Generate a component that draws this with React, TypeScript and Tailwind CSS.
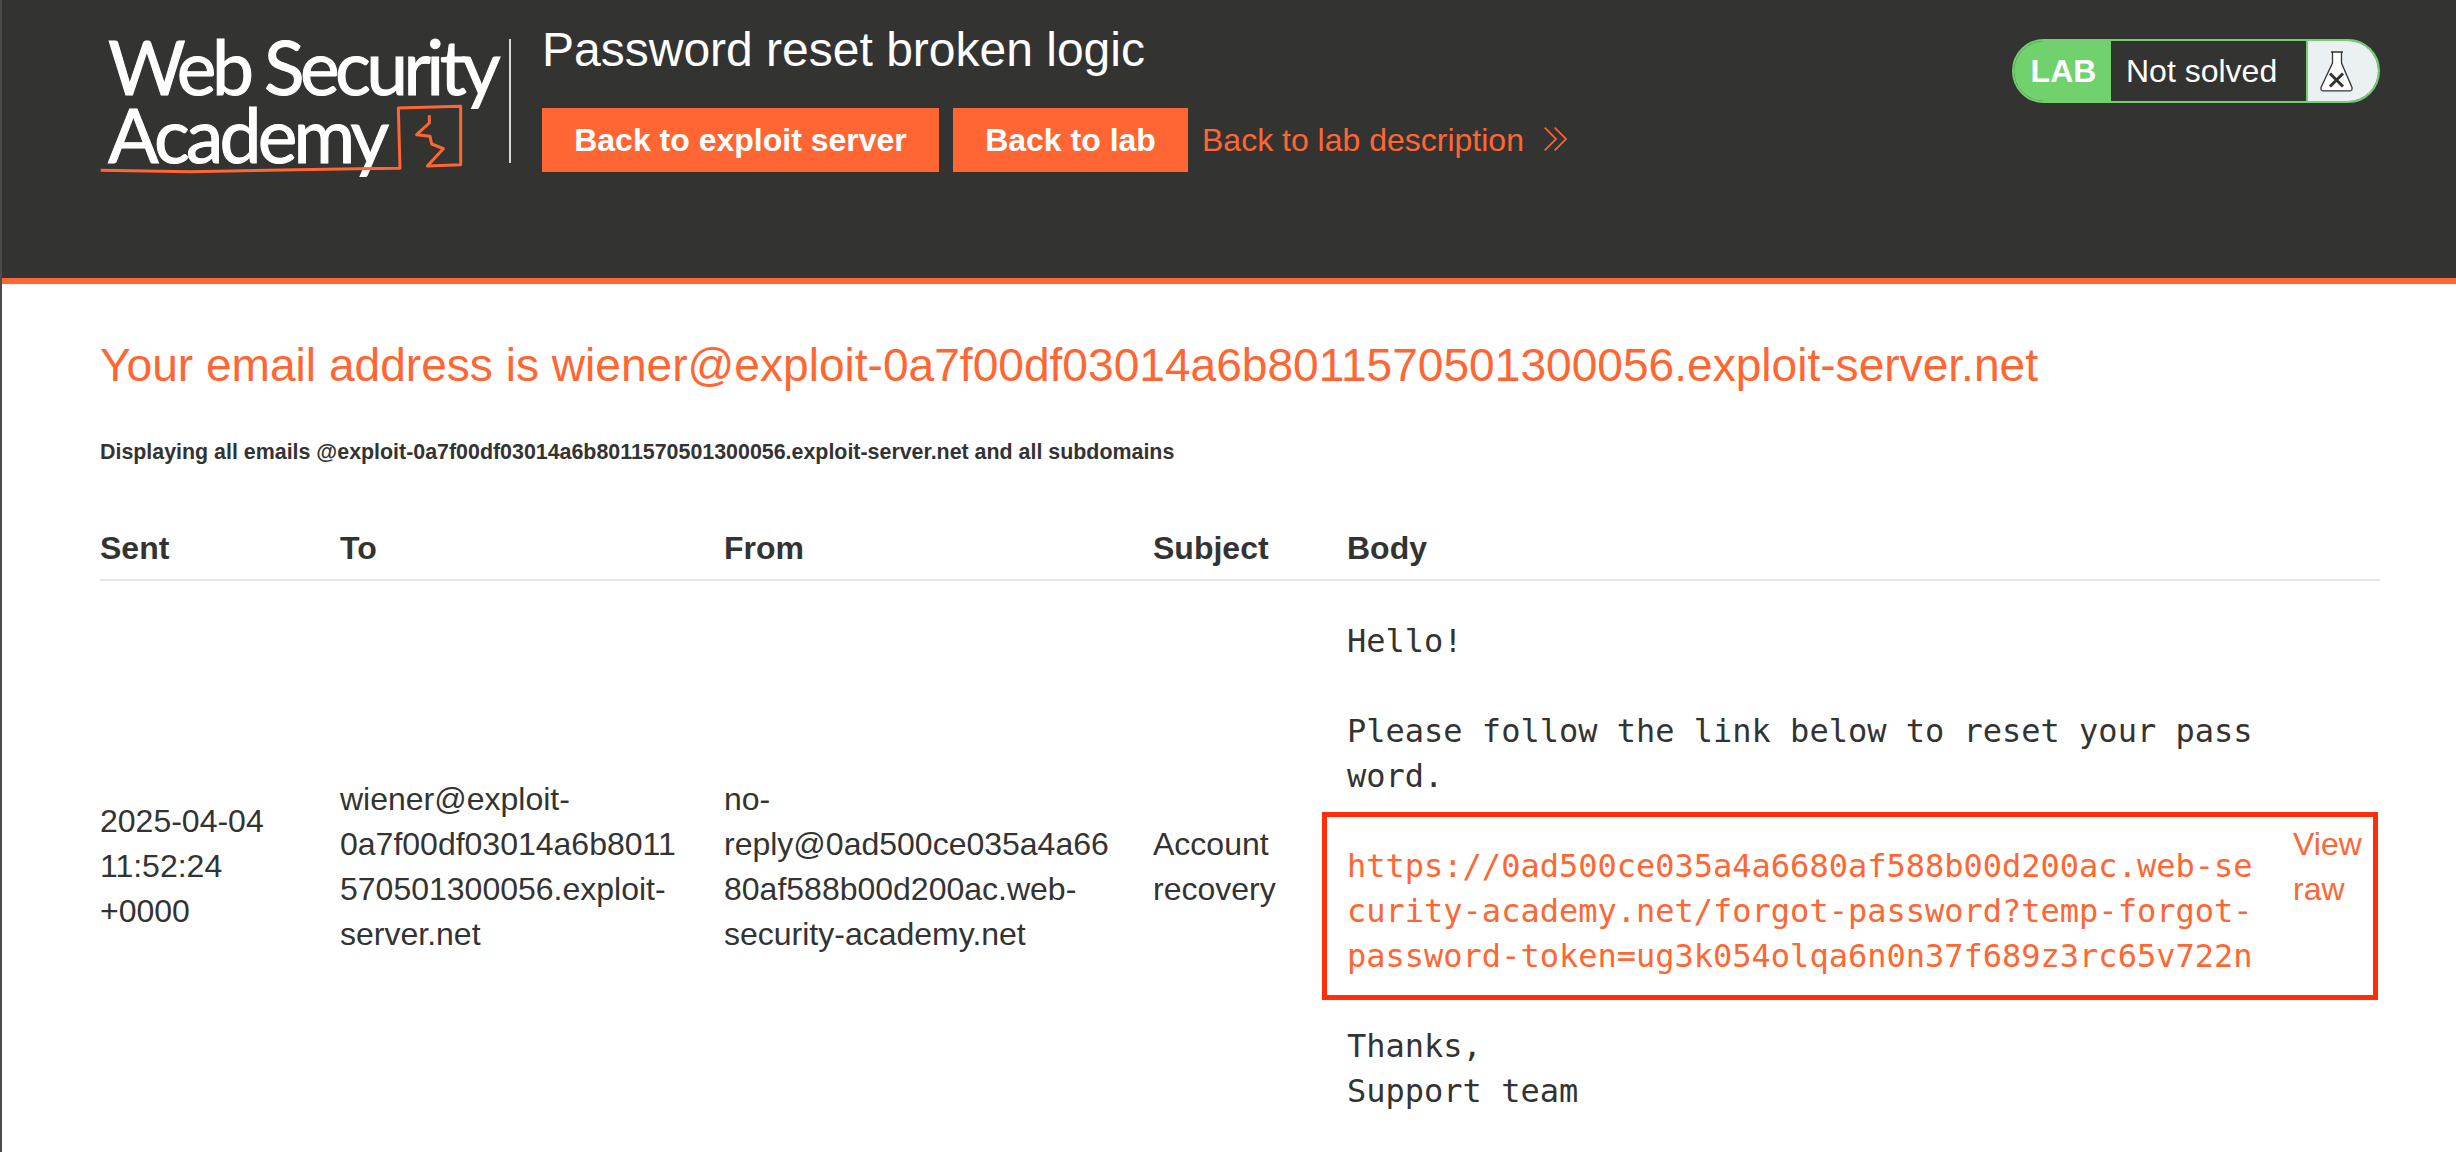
const sans = "font-['Liberation_Sans',Arial,sans-serif]"
const cols = "grid grid-cols-[240px_384px_429px_194px_1fr]"

function Logo() {
  return (
    <div className="relative w-[410px] h-[150px] shrink-0 font-['Lato',sans-serif] text-white [-webkit-text-stroke:1px_white]">
      <div className="flex flex-col gap-[4px] mt-[-4.5px] text-[75px] leading-[64px] whitespace-nowrap">
        <div className="tracking-[-4.55px]">Web Security</div>
        <div className="tracking-[-3.8px]">Academy</div>
      </div>
      <svg
        className="absolute left-[-18px] top-[-20px]"
        width="440"
        height="170"
        viewBox="0 0 1320 510"
        fill="none"
      >
        <path
          d="M32 457 L300 461 L800 452 L930 451 L925 270 L1112 265 L1112 440 L1012 444 L1060 392 L1025 378 L1020 355 L980 350 L1018 315 L1018 292"
          stroke="#ff6633"
          strokeWidth="9"
          strokeLinejoin="round"
        />
      </svg>
    </div>
  )
}

function LabBadge() {
  return (
    <div className={`flex h-[64px] w-[368px] rounded-[32px] overflow-hidden border-2 border-[#70d16d] ${sans}`}>
      <div className="w-[97px] bg-[#70d16d] text-white font-bold text-[32px] flex items-center justify-center pl-[2px]">
        LAB
      </div>
      <div className="w-[197px] bg-[#333332] text-white text-[32px] flex items-center pl-[15px] border-r-2 border-[#70d16d]">
        Not solved
      </div>
      <div className="flex-1 bg-[#ebf0f2] flex items-center pl-[12px]">
        <svg width="33" height="41" viewBox="0 0 33 41">
          <path
            d="M11 1 H23 M12.5 1 V12 L1 36.5 Q0.5 39.8 3 39.8 H30 Q32.5 39.8 32 36.5 L21.5 12 V1"
            fill="#fff"
            stroke="#333332"
            strokeWidth="1.3"
          />
          <path d="M10 22.5 L23 35.5 M23 22.5 L10 35.5" stroke="#333332" strokeWidth="3" />
        </svg>
      </div>
    </div>
  )
}

function Header() {
  return (
    <header className="h-[284px] bg-[#333332] border-b-[6px] border-[#ff6633] flex pl-[106px] pr-[76px] text-white">
      <div className="pt-[38px]">
        <div className="flex">
          <Logo />
          <div className="w-[2px] h-[124px] bg-[#d9d9d9] ml-[-9px] mt-[1px]" />
        </div>
      </div>
      <div className={`ml-[31px] flex-1 ${sans}`}>
        <h2 className="text-[48px] leading-[52px] pt-[24px] font-normal">Password reset broken logic</h2>
        <div className="flex items-center mt-[32px] gap-[14px]">
          <a className="h-[64px] w-[397px] bg-[#ff6633] font-bold text-[32px] flex items-center justify-center">
            Back to exploit server
          </a>
          <a className="h-[64px] w-[235px] bg-[#ff6633] font-bold text-[32px] flex items-center justify-center">
            Back to lab
          </a>
          <a className="flex items-center text-[#ff6633] text-[32px] whitespace-nowrap">
            Back to lab description
            <svg className="ml-[20px] mt-[-2px]" width="23" height="24" viewBox="0 0 23 24" fill="none" stroke="#ff6633" strokeWidth="1.7">
              <path d="M0.7 0.7 L12 12 L0.7 23.3 M10.7 0.7 L22 12 L10.7 23.3" />
            </svg>
          </a>
        </div>
      </div>
      <div className="pt-[39px]">
        <LabBadge />
      </div>
    </header>
  )
}

const th = "text-left font-bold pt-[1px] pb-[8px]"

export default function App() {
  return (
    <div className={`h-[1152px] overflow-hidden bg-white border-l-2 border-[#4a4a4f] text-[#333332] ${sans}`}>
      <Header />
      <main className="pl-[98px] pr-[76px]">
        <h1 className="text-[46.1px] leading-[52px] pt-[55px] text-[#ff6633] font-normal whitespace-nowrap">
          Your email address is wiener@exploit-0a7f00df03014a6b8011570501300056.exploit-server.net
        </h1>
        <h4 className="text-[21.4px] leading-[24px] mt-[49px] font-bold">
          Displaying all emails @exploit-0a7f00df03014a6b8011570501300056.exploit-server.net and all subdomains
        </h4>
        <div className="relative mt-[61px] text-[32px] leading-[45px]">
          <div className={`${cols} border-b-2 border-[#e6e6e6]`}>
            <div className={th}>Sent</div>
            <div className={th}>To</div>
            <div className={th}>From</div>
            <div className={th}>Subject</div>
            <div className={th}>Body</div>
          </div>
          <div className={`${cols} items-center`}>
            <div className="pr-[40px]">2025-04-04 11:52:24 +0000</div>
            <div className="pr-[20px]">
              wiener@exploit-
              <br />
              0a7f00df03014a6b8011
              <br />
              570501300056.exploit-
              <br />
              server.net
            </div>
            <div className="pr-[20px]">
              no-
              <br />
              reply@0ad500ce035a4a66
              <br />
              80af588b00d200ac.web-
              <br />
              security-academy.net
            </div>
            <div>
              Account
              <br />
              recovery
            </div>
            <div className="flex items-center">
              <pre className="w-[906px] shrink-0 text-[32px] leading-[45px] font-['DejaVu_Sans_Mono',monospace] py-[38px] whitespace-pre">
                {"Hello!\n\nPlease follow the link below to reset your pass\nword.\n\n"}
                <span className="text-[#ff6633]">
                  {"https://0ad500ce035a4a6680af588b00d200ac.web-se\ncurity-academy.net/forgot-password?temp-forgot-\npassword-token=ug3k054olqa6n0n37f689z3rc65v722n"}
                </span>
                {"\n\nThanks,\nSupport team"}
              </pre>
              <div className="ml-[40px] text-[#ff6633]">
                View
                <br />
                raw
              </div>
              {/* red annotation box drawn over the screenshot */}
              <div className="absolute left-[1222px] top-[287px] w-[1056px] h-[188px] border-[5px] border-[#ff2d0a]" />
            </div>
          </div>
        </div>
      </main>
    </div>
  )
}
